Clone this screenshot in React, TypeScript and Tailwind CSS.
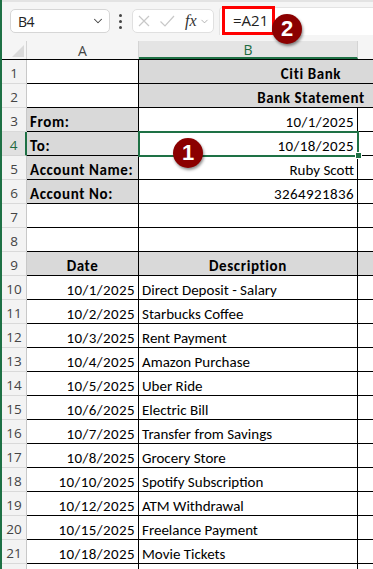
import React from "react";
import { ChevronDown } from "lucide-react";

type Row = {
  a?: string;
  b?: string;
  aGray?: boolean;
  bGray?: boolean;
  cGray?: boolean;
  aAlign?: "left" | "right" | "center";
  bAlign?: "left" | "right" | "center";
  aBold?: boolean;
  bBold?: boolean;
  merged?: boolean;
};

const rows: Row[] = [
  { b: "Citi Bank", merged: true, bGray: true, bBold: true },
  { b: "Bank Statement", merged: true, bGray: true, bBold: true },
  { a: "From:", b: "10/1/2025", aGray: true, aBold: true, bAlign: "right" },
  { a: "To:", b: "10/18/2025", aGray: true, aBold: true, bAlign: "right" },
  { a: "Account Name:", b: "Ruby Scott", aGray: true, aBold: true, bAlign: "right" },
  { a: "Account No:", b: "3264921836", aGray: true, aBold: true, bAlign: "right" },
  {},
  {},
  { a: "Date", b: "Description", aGray: true, bGray: true, cGray: true, aBold: true, bBold: true, aAlign: "center", bAlign: "center" },
  { a: "10/1/2025", b: "Direct Deposit - Salary", aAlign: "right" },
  { a: "10/2/2025", b: "Starbucks Coffee", aAlign: "right" },
  { a: "10/3/2025", b: "Rent Payment", aAlign: "right" },
  { a: "10/4/2025", b: "Amazon Purchase", aAlign: "right" },
  { a: "10/5/2025", b: "Uber Ride", aAlign: "right" },
  { a: "10/6/2025", b: "Electric Bill", aAlign: "right" },
  { a: "10/7/2025", b: "Transfer from Savings", aAlign: "right" },
  { a: "10/8/2025", b: "Grocery Store", aAlign: "right" },
  { a: "10/10/2025", b: "Spotify Subscription", aAlign: "right" },
  { a: "10/12/2025", b: "ATM Withdrawal", aAlign: "right" },
  { a: "10/15/2025", b: "Freelance Payment", aAlign: "right" },
  { a: "10/18/2025", b: "Movie Tickets", aAlign: "right" },
  {},
];

const alignClass = (al?: "left" | "right" | "center") =>
  al === "right" ? "justify-end" : al === "center" ? "justify-center" : "justify-start";

const textLook = (text: string | undefined, bold?: boolean) =>
  bold ? "font-bold tracking-[0.6px]" : text && /^[0-9/]+$/.test(text) ? "tracking-[0.4px]" : "";

const Badge = ({ n, className }: { n: string; className: string }) => (
  <div
    className={`absolute w-[30px] h-[30px] rounded-full bg-[#8b0000] flex items-center justify-center text-white font-bold text-[22px] leading-none font-['Liberation_Sans',Arial,sans-serif] shadow-[1px_2px_3px_rgba(0,0,0,0.45)] ${className}`}
  >
    {n}
  </div>
);

export default function App() {
  return (
    <div className="relative w-[373px] h-[569px] overflow-hidden bg-white border-l-2 border-[#1e7145] font-['Open_Sans',sans-serif]">
      {/* formula bar */}
      <div className="h-[41px] bg-[#f5f5f5] border-t-[2px] border-[#e3e3e3] relative">
        <div className="absolute left-[8px] top-[7px] w-[100px] h-[24px] bg-white border border-[#d6d6d6] rounded-[5px] flex items-center justify-between pl-[7px] pr-[4px]">
          <span className="text-[14px] text-[#222] tracking-[-0.5px]">B4</span>
          <ChevronDown className="w-[14px] h-[14px] text-[#444]" strokeWidth={1.8} />
        </div>
        <div className="absolute left-[117px] top-[12px] flex flex-col gap-[3px]">
          <span className="block w-[3px] h-[3px] bg-[#444] rounded-full" />
          <span className="block w-[3px] h-[3px] bg-[#444] rounded-full" />
          <span className="block w-[3px] h-[3px] bg-[#444] rounded-full" />
        </div>
        <div className="absolute left-[130px] top-[7px] w-[82px] h-[24px] bg-white border border-[#e0e0e0] rounded-[5px] flex items-center pl-[4px] gap-[6px]">
          <svg width="14" height="14" viewBox="0 0 14 14">
            <path d="M2 2 L12 12 M12 2 L2 12" stroke="#c8c8c8" strokeWidth="1.2" fill="none" />
          </svg>
          <svg width="16" height="14" viewBox="0 0 16 14" className="ml-[2px]">
            <path d="M1.5 7.5 L6 12 L15 2" stroke="#c8c8c8" strokeWidth="1.2" fill="none" />
          </svg>
          <span className="ml-[4px] text-[16px] italic text-[#333] font-['Liberation_Serif',serif] leading-none">fx</span>
          <ChevronDown className="w-[11px] h-[11px] text-[#999] -ml-[4px]" strokeWidth={1.6} />
        </div>
        <div className="absolute left-[217px] top-[5px] right-0 h-[28px] bg-white border-t border-l border-[#e3e3e3] rounded-tl-[4px]" />
        <div className="absolute left-[220px] top-[4px] w-[53px] h-[29px] border-[3px] border-[#ff0000] flex items-center pl-[8px]">
          <span className="text-[15px] text-[#222]">=A21</span>
        </div>
      </div>

      {/* column headers */}
      <div className="flex h-[19px] bg-[#f5f5f5] border-b border-black">
        <div className="w-[25px] h-full border-r border-[#d4d4d4] relative">
          <div className="absolute right-[2px] bottom-[2px] w-0 h-0 border-l-[12px] border-l-transparent border-b-[12px] border-b-[#dadada]" />
        </div>
        <div className="w-[112px] h-full border-r border-[#d4d4d4] flex items-center justify-center text-[14px] text-[#444]">A</div>
        <div className="w-[219px] h-full border-r border-[#d4d4d4] bg-[#e4e4e4] border-b-2 border-b-[#1e7145] flex items-center justify-center text-[14px] text-[#1e6b3f]">
          B
        </div>
        <div className="flex-1 h-full" />
      </div>

      {/* grid */}
      <div className="flex flex-col font-[Carlito,Lato,sans-serif] text-[15px] leading-none text-black">
        {rows.map((r, i) => {
          const selected = i === 3;
          return (
            <div key={i} className="flex h-[24px]">
              <div
                className={`w-[25px] h-full shrink-0 flex items-end justify-center pb-[3px] text-[13.5px] leading-none font-['Open_Sans',sans-serif] border-b ${
                  selected
                    ? "bg-[#e1e1e1] text-[#1e6b3f] border-r-2 border-r-[#1e7145] border-b-[#d4d4d4]"
                    : "bg-[#f3f3f3] text-[#444] border-r border-r-[#c8c8c8] border-b-[#d9d9d9]"
                }`}
              >
                {i < 21 ? i + 1 : ""}
              </div>
              <div
                className={`w-[112px] h-full shrink-0 border-r border-b border-black flex items-end pb-[1px] px-[3px] whitespace-nowrap ${alignClass(
                  r.aAlign
                )} ${r.aGray ? "bg-[#d9d9d9]" : "bg-white"} ${textLook(r.a, r.aBold)}`}
              >
                {r.a}
              </div>
              {r.merged ? (
                <div className="flex-1 h-full border-b border-black bg-[#d9d9d9] overflow-hidden relative">
                  <div className="absolute left-0 top-0 w-[344px] h-full flex items-end justify-center pb-[1px] font-bold tracking-[0.6px] whitespace-nowrap">
                    {r.b}
                  </div>
                </div>
              ) : (
                <>
                  <div
                    className={`w-[219px] h-full shrink-0 border-r border-b border-black flex items-end pb-[1px] px-[3px] whitespace-nowrap ${alignClass(
                      r.bAlign
                    )} ${r.bGray ? "bg-[#d9d9d9]" : "bg-white"} ${textLook(r.b, r.bBold)}`}
                  >
                    {r.b}
                  </div>
                  <div className={`flex-1 h-full border-b border-black ${r.cGray ? "bg-[#d9d9d9]" : "bg-white"}`} />
                </>
              )}
            </div>
          );
        })}
      </div>

      {/* selection on B4 */}
      <div className="absolute left-[136px] top-[131px] w-[221px] h-[26px] border-2 border-[#1e7145] pointer-events-none" />
      <div className="absolute left-[353px] top-[152px] w-[7px] h-[7px] bg-[#1e7145] border border-white" />

      <Badge n="1" className="left-[171px] top-[138px]" />
      <Badge n="2" className="left-[270px] top-[14px]" />
    </div>
  );
}
